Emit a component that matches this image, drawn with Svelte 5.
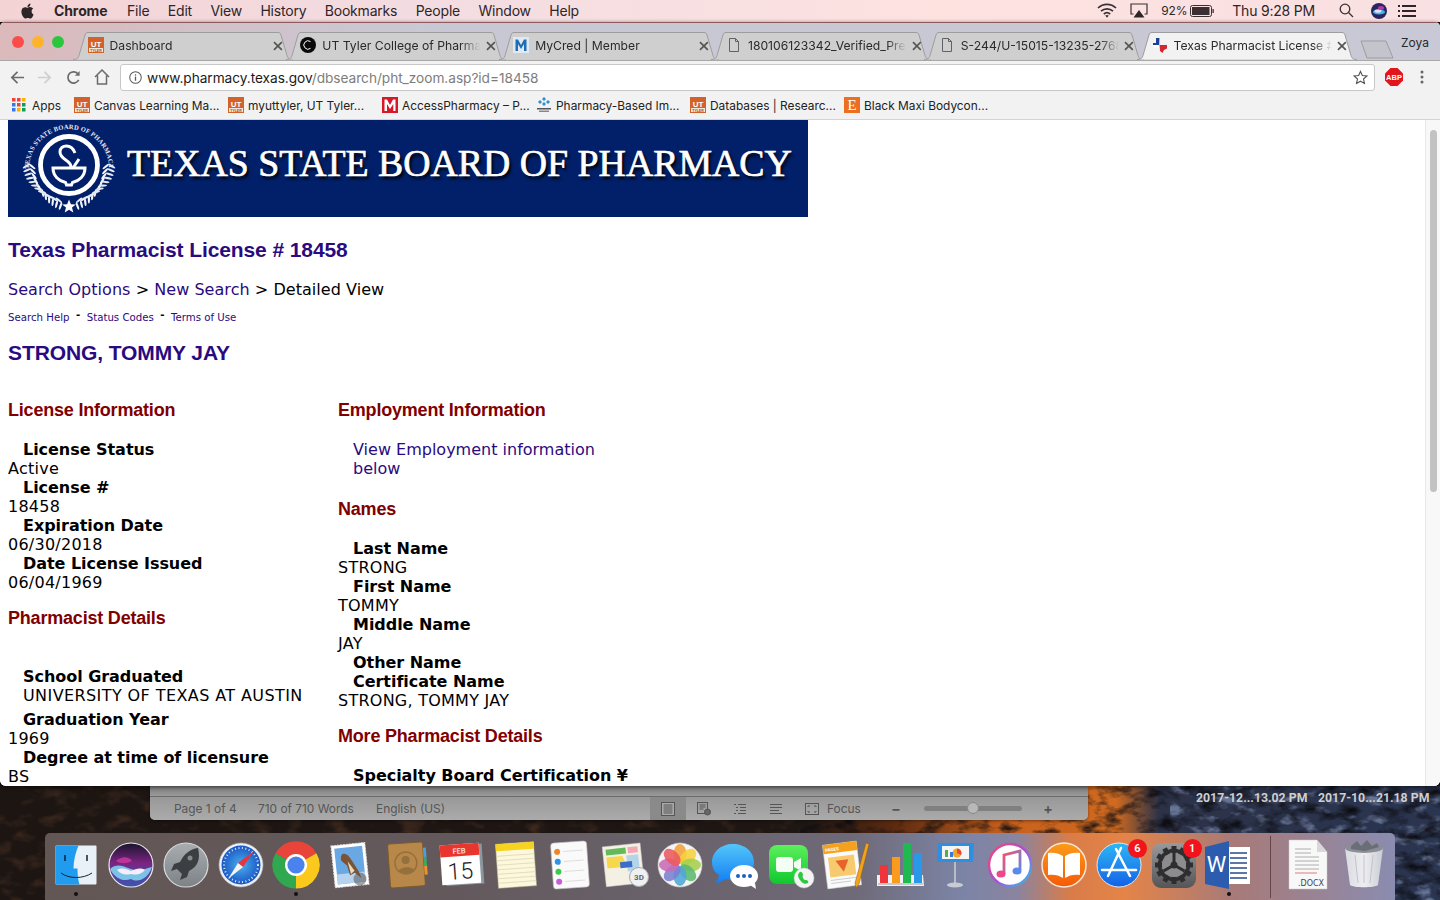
<script lang="ts">
  const menus = ['File', 'Edit', 'View', 'History', 'Bookmarks', 'People', 'Window', 'Help'];

  const tabs = [
    { title: 'Dashboard', icon: 'ut' },
    { title: 'UT Tyler College of Pharmacy', icon: 'circle' },
    { title: 'MyCred | Member', icon: 'm' },
    { title: '180106123342_Verified_Preview', icon: 'file' },
    { title: 'S-244/U-15015-13235-27680', icon: 'file' },
    { title: 'Texas Pharmacist License # 18458', icon: 'texas', active: true }
  ];

  const bookmarks = [
    { title: 'Canvas Learning Ma...', icon: 'ut', width: 154 },
    { title: 'myuttyler, UT Tyler...', icon: 'ut', width: 154 },
    { title: 'AccessPharmacy – P...', icon: 'red', width: 154 },
    { title: 'Pharmacy-Based Im...', icon: 'learner', width: 154 },
    { title: 'Databases | Researc...', icon: 'ut', width: 154 },
    { title: 'Black Maxi Bodycon...', icon: 'etsy', width: 160 }
  ];

  const licenseFields = [
    ['License Status', 'Active'],
    ['License #', '18458'],
    ['Expiration Date', '06/30/2018'],
    ['Date License Issued', '06/04/1969']
  ];

  const nameFields = [
    ['Last Name', 'STRONG'],
    ['First Name', 'TOMMY'],
    ['Middle Name', 'JAY'],
    ['Other Name', ''],
    ['Certificate Name', 'STRONG, TOMMY JAY']
  ];

  const petals = ['#f2a13a', '#f6d13c', '#a5cf4c', '#5cb96f', '#4fa6d8', '#7a7fd0', '#c86bb5', '#ea5a5f'];
  const gearTeeth = [0, 30, 60, 90, 120, 150, 180, 210, 240, 270, 300, 330];

  // laurel leaves on the seal, walking down the ring from the side to the star
  const laurel = Array.from({ length: 12 }, (_, i) => {
    const deg = 4 + i * 6.4;
    const rad = (deg * Math.PI) / 180;
    return { deg, x: 40 * Math.cos(rad), y: 40 * Math.sin(rad) };
  });
</script>

{#snippet utIcon()}
  <svg class="fav" viewBox="0 0 16 16">
    <rect width="16" height="16" fill="#d2622a" />
    <text x="8" y="9.5" text-anchor="middle" class="fav-ut">UT</text>
    <rect x="1" y="11" width="14" height="4" fill="#f5e6d8" />
    <text x="8" y="14.5" text-anchor="middle" class="fav-tyler">TYLER</text>
  </svg>
{/snippet}

{#snippet favicon(name)}
  {#if name === 'ut'}
    {@render utIcon()}
  {:else if name === 'circle'}
    <svg class="fav" viewBox="0 0 16 16">
      <circle cx="8" cy="8" r="8" fill="#0a0a0a" />
      <path d="M10.5 4.6A4.2 4.2 0 1 0 10.5 11.4" fill="none" stroke="#fff" stroke-width="1" />
    </svg>
  {:else if name === 'm'}
    <svg class="fav" viewBox="0 0 16 16">
      <rect width="16" height="16" fill="#dfe9f3" />
      <path d="M2.5 14V2.5H5L8 8l3-5.500h2.500V14h-2.500V7L8 12 5 7v7z" fill="#1f6db5" />
    </svg>
  {:else if name === 'file'}
    <svg class="fav" viewBox="0 0 16 16">
      <path d="M3.500 1.500h6l3 3v10h-9zM9.500 1.500v3h3" fill="none" stroke="#5f6368" stroke-width="1" />
    </svg>
  {:else if name === 'texas'}
    <svg class="fav" viewBox="0 0 16 16">
      <path d="M4 1h4v5l7 1.500v4l-3 1.500-1.500 3-2.500-2-1.500-3-2-1-1.500 1.500L1 8V6h3z" fill="#fff" />
      <path d="M4 1h3.500v7H1V6h3z" fill="#1c3f94" />
      <path d="M7.500 8H15v3.500l-3 1.500-1.500 3-2.500-2z" fill="#d22630" />
      <path d="M7.500 1v7H15V7L8 6z" fill="#eef0f4" />
    </svg>
  {:else if name === 'red'}
    <svg class="fav" viewBox="0 0 16 16">
      <rect width="16" height="16" fill="#d7182a" />
      <path d="M2.500 14V2.500H5L8 8l3-5.500h2.500V14h-2.200V7L8 12 5 7v7z" fill="#fff" />
    </svg>
  {:else if name === 'learner'}
    <svg class="fav" viewBox="0 0 16 16">
      <path d="M8 0l2 2-2 2-2-2zM4 3l2 2-2 2-2-2zM12 3l2 2-2 2-2-2zM8 5l2 2-2 2-2-2z" fill="#2b8fd0" />
      <rect x="1" y="11" width="14" height="1.500" fill="#555" />
      <rect x="3" y="13.500" width="10" height="1.500" fill="#888" />
    </svg>
  {:else if name === 'etsy'}
    <svg class="fav" viewBox="0 0 16 16">
      <rect width="16" height="16" fill="#ee6e1f" />
      <text x="8" y="13" text-anchor="middle" class="fav-etsy">E</text>
    </svg>
  {/if}
{/snippet}

<div class="screen">
  <header class="menubar">
    <svg class="apple" viewBox="0 0 24 24"><path d="M12.152 6.896c-.948 0-2.415-1.078-3.960-1.040-2.040.027-3.910 1.183-4.961 3.014-2.117 3.675-.546 9.103 1.519 12.090 1.013 1.454 2.208 3.090 3.792 3.039 1.520-.065 2.090-.987 3.935-.987 1.831 0 2.350.987 3.960.948 1.637-.026 2.676-1.480 3.676-2.948 1.156-1.688 1.636-3.325 1.662-3.415-.039-.013-3.182-1.221-3.220-4.857-.026-3.040 2.480-4.494 2.597-4.559-1.429-2.090-3.623-2.324-4.390-2.376-2-.156-3.675 1.090-4.610 1.090zM15.530 3.830c.843-1.012 1.400-2.427 1.245-3.830-1.207.052-2.662.805-3.532 1.818-.780.896-1.454 2.338-1.273 3.714 1.338.104 2.715-.688 3.559-1.701" /></svg>
    <strong class="app-name">Chrome</strong>
    <nav class="menus">
      {#each menus as m}<span>{m}</span>{/each}
    </nav>
    <div class="status">
      <svg class="st-wifi" viewBox="0 0 20 15" fill="none" stroke="#3a3033" stroke-width="1.700">
        <path d="M1 5a13 13 0 0 1 18 0M4 8.200a9 9 0 0 1 12 0M6.800 11a5 5 0 0 1 6.400 0" />
        <path d="M10 14.800l-1.800-2.200a3 3 0 0 1 3.600 0z" fill="#3a3033" stroke="none" />
      </svg>
      <svg class="st-air" viewBox="0 0 18 15">
        <path d="M3.500 11H1V1h16v10h-2.500" fill="none" stroke="#3a3033" stroke-width="1.200" />
        <path d="M9 7l5.500 7.500h-11z" fill="#2e2528" />
      </svg>
      <span class="st-pct">92%</span>
      <svg class="st-batt" viewBox="0 0 24 12">
        <rect x=".5" y=".5" width="21" height="11" rx="2" fill="none" stroke="#3a3033" />
        <rect x="2" y="2" width="17.500" height="8" fill="#3a3033" />
        <rect x="22.500" y="4" width="1.300" height="4" fill="#3a3033" />
      </svg>
      <span class="st-time">Thu 9:28 PM</span>
      <svg class="st-search" viewBox="0 0 15 15" fill="none" stroke="#3a3033" stroke-width="1.300">
        <circle cx="6" cy="6" r="4.800" /><path d="M9.500 9.500L14 14" />
      </svg>
      <svg class="st-siri" viewBox="0 0 16 16">
        <circle cx="8" cy="8" r="8" fill="#2a2560" />
        <ellipse cx="8" cy="9" rx="6" ry="2.600" fill="#3fb6e8" />
        <ellipse cx="7" cy="8" rx="3.500" ry="1.800" fill="#e0dff8" />
        <ellipse cx="10" cy="5" rx="3" ry="2" fill="#b83aa8" />
      </svg>
      <svg class="st-list" viewBox="0 0 18 12" fill="#2e2528">
        <rect x="0" y="0" width="2" height="2" /><rect x="4" y="0" width="14" height="2" />
        <rect x="0" y="5" width="2" height="2" /><rect x="4" y="5" width="14" height="2" />
        <rect x="0" y="10" width="2" height="2" /><rect x="4" y="10" width="14" height="2" />
      </svg>
    </div>
  </header>

  <section class="window">
    <div class="tabstrip">
      <div class="lights"><i class="red"></i><i class="amber"></i><i class="green"></i></div>
      <div class="tabs">
        {#each tabs as tab}
          <div class="tab" class:active={tab.active}>
            <svg class="tab-shape" viewBox="0 0 220 28">
              <path d="M0 27.500c4 0 5-1 6-4L12 3c.5-1.800 1.500-2.500 3-2.500h190c1.500 0 2.500.7 3 2.500l6 20.500c1 3 2 4 6 4" />
            </svg>
            {@render favicon(tab.icon)}
            <span class="tab-title">{tab.title}</span>
            <svg class="tab-x" viewBox="0 0 10 10"><path d="M1 1l8 8M9 1l-8 8" /></svg>
          </div>
        {/each}
        <svg class="newtab" viewBox="0 0 34 19"><path d="M1 1h25l7 17H7z" /></svg>
      </div>
      <span class="profile">Zoya</span>
    </div>

    <div class="toolbar">
      <svg class="tb tb-back" viewBox="0 0 16 16" fill="none" stroke="#6b6b6b" stroke-width="1.800"><path d="M15 8H2M8 2L2 8l6 6" /></svg>
      <svg class="tb tb-fwd" viewBox="0 0 16 16" fill="none" stroke="#cfcfcf" stroke-width="1.800"><path d="M1 8h13M8 2l6 6-6 6" /></svg>
      <svg class="tb tb-reload" viewBox="0 0 16 16" fill="none" stroke="#6b6b6b" stroke-width="1.800"><path d="M13.500 10.500A6 6 0 1 1 13 4.500" /><path d="M14.500 1v5h-5z" fill="#6b6b6b" stroke="none" /></svg>
      <svg class="tb tb-home" viewBox="0 0 16 16" fill="none" stroke="#6b6b6b" stroke-width="1.500"><path d="M1 8l7-7 7 7M3.500 6.500V15h9V6.500" /></svg>
      <div class="urlbar">
        <svg class="url-info" viewBox="0 0 14 14"><circle cx="7" cy="7" r="6.200" fill="none" stroke="#5a5a5a" stroke-width="1.100" /><rect x="6.300" y="6" width="1.400" height="4.500" fill="#5a5a5a" /><rect x="6.300" y="3.500" width="1.400" height="1.400" fill="#5a5a5a" /></svg>
        <span class="url-text"><span class="url-host">www.pharmacy.texas.gov</span>/dbsearch/pht_zoom.asp?id=18458</span>
        <svg class="url-star" viewBox="0 0 16 16"><path d="M8 1.500l2 4.400 4.800.5-3.600 3.200 1 4.700L8 11.900l-4.200 2.400 1-4.700L1.200 6.400 6 5.900z" fill="none" stroke="#555" stroke-width="1.200" /></svg>
      </div>
      <svg class="abp" viewBox="0 0 18 18">
        <path d="M5.500 0h7L18 5.500v7L12.500 18h-7L0 12.500v-7z" fill="#e2141c" />
        <text x="9" y="12" text-anchor="middle" class="abp-text">ABP</text>
      </svg>
      <svg class="kebab" viewBox="0 0 4 14" fill="#666"><circle cx="2" cy="2" r="1.500" /><circle cx="2" cy="7" r="1.500" /><circle cx="2" cy="12" r="1.500" /></svg>
    </div>

    <div class="bookmarks">
      <span class="bm bm-apps">
        <svg class="fav" viewBox="0 0 14 14">
          <rect x="0" y="0" width="3.500" height="3.500" fill="#e8453c" /><rect x="5" y="0" width="3.500" height="3.500" fill="#e8453c" /><rect x="10" y="0" width="3.500" height="3.500" fill="#f4b400" />
          <rect x="0" y="5" width="3.500" height="3.500" fill="#3b78e7" /><rect x="5" y="5" width="3.500" height="3.500" fill="#e8453c" /><rect x="10" y="5" width="3.500" height="3.500" fill="#0f9d58" />
          <rect x="0" y="10" width="3.500" height="3.500" fill="#3b78e7" /><rect x="5" y="10" width="3.500" height="3.500" fill="#f4b400" /><rect x="10" y="10" width="3.500" height="3.500" fill="#0f9d58" />
        </svg>
        Apps
      </span>
      {#each bookmarks as b}
        <span class="bm" style="width: {b.width}px">
          {@render favicon(b.icon)}
          {b.title}
        </span>
      {/each}
    </div>

    <main class="page">
      <div class="banner">
        <svg class="seal" viewBox="0 0 96 96">
          <defs>
            <path id="sealArc" d="M8 48a40 40 0 0 1 80 0" />
          </defs>
          <text class="seal-text"><textPath href="#sealArc" startOffset="50%" text-anchor="middle">TEXAS STATE BOARD OF PHARMACY</textPath></text>
          <circle cx="48" cy="44" r="28.500" fill="none" stroke="#fff" stroke-width="4.800" />
          <path d="M32 47h32c0 8-6 13-12.500 14.500l-1 2.500h-5l-1-2.500C38 60 32 55 32 47z" fill="none" stroke="#fff" stroke-width="3" />
          <path d="M50 46C50 39 39 39 39 31 39 27 42 25 45.500 25 50 25 52.500 28 54 32" fill="none" stroke="#fff" stroke-width="3" />
          <path d="M52 47l6-9" stroke="#fff" stroke-width="3" />
          {#each laurel as l}
            <g transform="translate({48 - l.x} {44 + l.y}) rotate({l.deg})">
              <ellipse cx="-3" cy="-1.500" rx="4" ry="1.100" fill="#e4e8f0" transform="rotate(-35 -3 -1.500)" />
              <ellipse cx="3" cy="-1.500" rx="4" ry="1.100" fill="#f4f6fa" transform="rotate(35 3 -1.500)" />
            </g>
            <g transform="translate({48 + l.x} {44 + l.y}) rotate({-l.deg})">
              <ellipse cx="-3" cy="-1.500" rx="4" ry="1.100" fill="#f4f6fa" transform="rotate(-35 -3 -1.500)" />
              <ellipse cx="3" cy="-1.500" rx="4" ry="1.100" fill="#e4e8f0" transform="rotate(35 3 -1.500)" />
            </g>
          {/each}
          <path d="M48 78.500l1.900 4.700 5 .3-3.900 3.100 1.300 4.900-4.300-2.700-4.300 2.700 1.300-4.900-3.900-3.100 5-.3z" fill="#fff" />
        </svg>
        <span class="banner-title">TEXAS STATE BOARD OF PHARMACY</span>
      </div>

      <h1>Texas Pharmacist License # 18458</h1>
      <p class="crumbs"><a href="#top">Search Options</a> &gt; <a href="#top">New Search</a> &gt; Detailed View</p>
      <p class="helplinks">
        <a href="#top">Search Help</a><b>-</b><a href="#top">Status Codes</a><b>-</b><a href="#top">Terms of Use</a>
      </p>
      <h2 class="person">STRONG, TOMMY JAY</h2>

      <div class="columns">
        <div class="col col-left">
          <h3>License Information</h3>
          <dl class="fields">
            {#each licenseFields as [k, v]}
              <dt>{k}</dt>
              <dd>{v}</dd>
            {/each}
          </dl>

          <h3 class="h-pharm">Pharmacist Details</h3>
          <dl class="fields school">
            <dt>School Graduated</dt>
            <dd class="indented">UNIVERSITY OF TEXAS AT AUSTIN</dd>
          </dl>
          <dl class="fields grad">
            <dt>Graduation Year</dt>
            <dd>1969</dd>
            <dt>Degree at time of licensure</dt>
            <dd>BS</dd>
          </dl>
        </div>

        <div class="col col-right">
          <h3>Employment Information</h3>
          <p class="emp-link"><a href="#top">View Employment information below</a></p>

          <h3 class="h-names">Names</h3>
          <dl class="fields">
            {#each nameFields as [k, v]}
              <dt>{k}</dt>
              {#if v}<dd>{v}</dd>{/if}
            {/each}
          </dl>

          <h3 class="h-more">More Pharmacist Details</h3>
          <dl class="fields">
            <dt>Specialty Board Certification ¥</dt>
          </dl>
        </div>
      </div>

      <div class="scrollbar"><div class="thumb"></div></div>
    </main>
  </section>

  <section class="desktop">
    <svg class="wallpaper" viewBox="0 0 1440 114" preserveAspectRatio="none">
      <defs>
        <linearGradient id="wp" x1="0" x2="1" y1="0" y2="0">
          <stop offset="0" stop-color="#1c1512" />
          <stop offset=".56" stop-color="#1e1612" />
          <stop offset=".62" stop-color="#5a2a10" />
          <stop offset=".7" stop-color="#c8611c" />
          <stop offset=".775" stop-color="#cf6a20" />
          <stop offset=".805" stop-color="#2c3248" />
          <stop offset="1" stop-color="#2a3550" />
        </linearGradient>
        <filter id="rock" x="0" y="0" width="100%" height="100%" color-interpolation-filters="sRGB">
          <feTurbulence type="fractalNoise" baseFrequency=".05 .09" numOctaves="4" seed="7" />
          <feColorMatrix values="0 0 0 0 .05  0 0 0 0 .05  0 0 0 0 .07  2.400 0 0 0 -1.050" />
        </filter>
        <filter id="dirt" x="0" y="0" width="100%" height="100%" color-interpolation-filters="sRGB">
          <feTurbulence type="fractalNoise" baseFrequency=".04 .07" numOctaves="3" seed="21" />
          <feColorMatrix values="0 0 0 0 .24  0 0 0 0 .16  0 0 0 0 .12  0 3 0 0 -1.500" />
        </filter>
        <filter id="snow" x="0" y="0" width="100%" height="100%" color-interpolation-filters="sRGB">
          <feTurbulence type="fractalNoise" baseFrequency=".06 .1" numOctaves="3" seed="3" />
          <feColorMatrix values="0 0 0 0 .4  0 0 0 0 .45  0 0 0 0 .58  0 4 0 0 -2.200" />
        </filter>
      </defs>
      <rect width="1440" height="114" fill="url(#wp)" />
      <rect width="800" height="114" filter="url(#dirt)" />
      <rect x="1170" width="270" height="114" filter="url(#snow)" />
      <rect x="800" width="640" height="114" filter="url(#rock)" />
    </svg>

    <span class="shot shot-a">2017-12...13.02 PM</span>
    <span class="shot shot-b">2017-10...21.18 PM</span>

    <div class="word">
      <div class="word-ruler"></div>
      <div class="word-status">
        <span class="ws-text ws-page">Page 1 of 4</span>
        <span class="ws-text ws-words">710 of 710 Words</span>
        <span class="ws-text ws-lang">English (US)</span>
        <span class="ws-view active">
          <svg viewBox="0 0 14 14" fill="none" stroke="#555"><rect x=".5" y=".5" width="13" height="13" fill="#aaa" /><path d="M2.500 3h9M2.500 5h9M2.500 7h9M2.500 9h9M2.500 11h9" /></svg>
        </span>
        <span class="ws-view">
          <svg viewBox="0 0 14 14" fill="none" stroke="#555"><rect x=".5" y=".5" width="10" height="11" /><path d="M2.500 3h6M2.500 5h6M2.500 7h4" /><circle cx="10.500" cy="10" r="3" fill="#666" /></svg>
        </span>
        <span class="ws-view">
          <svg viewBox="0 0 14 14" fill="none" stroke="#555"><path d="M1 2.500h2M5 2.500h8M3 5.500h2M7 5.500h6M3 8.500h2M7 8.500h6M1 11.500h2M5 11.500h8" /></svg>
        </span>
        <span class="ws-view">
          <svg viewBox="0 0 14 14" fill="none" stroke="#555"><path d="M1 2.500h12M1 5.500h12M1 8.500h9M1 11.500h12" /></svg>
        </span>
        <span class="ws-focus">
          <svg viewBox="0 0 14 12" fill="none" stroke="#555"><rect x=".5" y=".5" width="13" height="11" /><path d="M3 4V3h2M9 3h2v1M11 8v1H9M5 9H3V8" /></svg>
          Focus
        </span>
        <span class="ws-minus">−</span>
        <div class="slider"><i></i></div>
        <span class="ws-plus">+</span>
      </div>
    </div>

    <div class="dock">
      <div class="dock-item dot">
        <svg viewBox="0 0 54 60">
          <rect x="6.500" y="10.500" width="41" height="39" rx="1" fill="#e8f1f8" />
          <path d="M7.500 10.500h22c-3 7-5 15-5 23h4c0 6 .5 11 2 16h-23a1 1 0 0 1-1-1v-37a1 1 0 0 1 1-1z" fill="#1f9cf0" />
          <path d="M12 38c8 6 22 6 31 0" fill="none" stroke="#123" stroke-width="1" />
          <path d="M16 20v6M38 20v6" stroke="#123" stroke-width="1.500" />
        </svg>
      </div>
      <div class="dock-item">
        <svg viewBox="0 0 54 60">
          <defs>
            <linearGradient id="siriG" x1="0" y1="0" x2="0" y2="1"><stop offset="0" stop-color="#18142c" /><stop offset=".45" stop-color="#7a2480" /><stop offset="1" stop-color="#3a56b0" /></linearGradient>
          </defs>
          <circle cx="27" cy="30" r="22" fill="url(#siriG)" stroke="#e8e8ee" stroke-width="1.200" />
          <path d="M6 34c7-6 12-3 21 0 8 3 13 0 21-2-4 12-14 16-21 12-7 3-16 0-21-10z" fill="#7fd0f0" opacity=".9" />
          <path d="M13 35c5-3 9-1 14 1 5-2 9-4 14-1-5 5-8 5-14 4-6 1-9 1-14-4z" fill="#f4eefa" />
          <path d="M12 26c6-5 12-5 16 0-6 3-11 3-16 0z" fill="#d03aa0" opacity=".8" />
        </svg>
      </div>
      <div class="dock-item">
        <svg viewBox="0 0 54 60">
          <defs>
            <linearGradient id="lpG" x1="0" y1="0" x2="0" y2="1"><stop offset="0" stop-color="#a8adb0" /><stop offset="1" stop-color="#7c8285" /></linearGradient>
          </defs>
          <circle cx="27" cy="30" r="22" fill="url(#lpG)" stroke="#d8dadc" stroke-width="1.200" />
          <path d="M39 13c-8 1-14 6-18 14l-6 2-3 7 6-2 5 5-2 6 7-3 2-6c8-4 12-11 9-23z" fill="#3c3f42" />
          <circle cx="31" cy="23" r="2.500" fill="#85898c" />
        </svg>
      </div>
      <div class="dock-item">
        <svg viewBox="0 0 54 60">
          <defs>
            <radialGradient id="sfG"><stop offset="0" stop-color="#4ab0ee" /><stop offset="1" stop-color="#1a56c4" /></radialGradient>
          </defs>
          <circle cx="27" cy="30" r="22" fill="#eef1f4" stroke="#aab" stroke-width=".6" />
          <circle cx="27" cy="30" r="19.500" fill="url(#sfG)" />
          <circle cx="27" cy="30" r="17" fill="none" stroke="#d8e8f8" stroke-width="2" stroke-dasharray="1 2.500" />
          <path d="M40 16L24 28l5 4z" fill="#e8343a" />
          <path d="M14 44l10-16 5 4z" fill="#f4f4f6" />
        </svg>
      </div>
      <div class="dock-item dot">
        <svg viewBox="0 0 54 60">
          <path d="M27 30L6.600 18.200A23.500 23.500 0 0 1 47.400 18.200z" fill="#e8443a" />
          <path d="M27 30L47.400 18.200A23.500 23.500 0 0 1 27 53.500z" fill="#fbc91c" />
          <path d="M27 30L27 53.500A23.500 23.500 0 0 1 6.600 18.200z" fill="#2fa84f" />
          <circle cx="27" cy="30" r="11" fill="#fff" />
          <circle cx="27" cy="30" r="8.600" fill="#4a82ee" />
        </svg>
      </div>
      <div class="dock-item">
        <svg viewBox="0 0 54 60">
          <g transform="rotate(-6 27 30)">
            <rect x="9" y="9" width="34" height="42" fill="#fff" stroke="#ddd" stroke-dasharray="2 1" />
            <rect x="12" y="12" width="28" height="36" fill="#6aa8e4" />
            <path d="M12 38h28v10H12z" fill="#b5d2ee" />
            <path d="M20 18c4 0 6 3 8 7l6 12 2 7-6-6-5 2-2-10-5-5c-1-3 0-6 2-7z" fill="#7a5434" />
            <path d="M24 26l6 10-4 3z" fill="#e8d8c0" />
          </g>
          <circle cx="36" cy="44" r="6.500" fill="#555" opacity=".55" />
        </svg>
      </div>
      <div class="dock-item">
        <svg viewBox="0 0 54 60">
          <g transform="rotate(-4 27 30)">
            <rect x="10" y="8" width="35" height="44" rx="2" fill="#b8874a" stroke="#7e5a2e" />
            <path d="M45 24h3v8h-3z" fill="#3fa56a" /><path d="M45 32h3v9h-3z" fill="#e8952a" /><path d="M45 14h3v10h-3z" fill="#4d9ed4" />
            <circle cx="27" cy="28" r="11" fill="none" stroke="#94703c" stroke-width="1.400" />
            <circle cx="27" cy="25" r="4" fill="#94703c" />
            <path d="M19 36c2-5 14-5 16 0-4 3-12 3-16 0z" fill="#94703c" />
          </g>
        </svg>
      </div>
      <div class="dock-item">
        <svg viewBox="0 0 54 60">
          <g transform="rotate(-4 27 30)">
            <rect x="11" y="10" width="38" height="40" fill="#8c97a2" />
            <rect x="7" y="9" width="39" height="40" fill="#fff" />
            <rect x="7" y="9" width="39" height="12" fill="#e8362e" />
            <text x="26" y="18.500" text-anchor="middle" class="cal-month">FEB</text>
            <text x="26" y="44" text-anchor="middle" class="cal-day">15</text>
          </g>
        </svg>
      </div>
      <div class="dock-item">
        <svg viewBox="0 0 54 60">
          <g transform="rotate(-4 27 30)">
            <rect x="8" y="8" width="38" height="44" fill="#fdf8dc" stroke="#c8c0a0" stroke-width=".5" />
            <rect x="8" y="8" width="38" height="7" fill="#f6d320" />
            <path d="M8 20h38M8 24.500h38M8 29h38M8 33.500h38M8 38h38M8 42.500h38M8 47h38" stroke="#d8d2b4" stroke-width=".7" />
          </g>
        </svg>
      </div>
      <div class="dock-item">
        <svg viewBox="0 0 54 60">
          <g transform="rotate(-4 27 30)">
            <rect x="9" y="7" width="36" height="46" rx="3" fill="#fafafa" stroke="#bbb" stroke-width=".6" />
            <circle cx="15" cy="16" r="3" fill="#f0862a" /><circle cx="15" cy="26" r="3" fill="#2a94ea" /><circle cx="15" cy="36" r="3" fill="#3ec948" /><circle cx="15" cy="46" r="3" fill="#c95ad8" />
            <path d="M21 16h20M21 26h20M21 36h20M21 46h20" stroke="#ddd" />
          </g>
        </svg>
      </div>
      <div class="dock-item">
        <svg viewBox="0 0 54 60">
          <g transform="rotate(-6 24 28)">
            <rect x="6" y="10" width="38" height="40" fill="#f4f0e4" stroke="#ccc" stroke-width=".5" />
            <rect x="9" y="13" width="20" height="6" fill="#63bb58" /><rect x="31" y="13" width="10" height="6" fill="#f4a8b4" />
            <path d="M9 21h16l4 11H9z" fill="#f6d84a" /><path d="M29 21h12v16H29z" fill="#b4d4ea" />
            <rect x="22" y="27" width="12" height="6" fill="#3a6ec8" />
          </g>
          <circle cx="41" cy="42" r="9.500" fill="#eef0f2" stroke="#aaa" />
          <text x="41" y="45" text-anchor="middle" class="map-3d">3D</text>
        </svg>
      </div>
      <div class="dock-item">
        <svg viewBox="0 0 54 60">
          <circle cx="27" cy="30" r="22" fill="#f4f4f4" stroke="#ccc" stroke-width=".6" />
          {#each petals as c, i}
            <ellipse cx="27" cy="19" rx="6.500" ry="10" fill={c} opacity=".88" transform="rotate({i * 45} 27 30)" />
          {/each}
        </svg>
      </div>
      <div class="dock-item">
        <svg viewBox="0 0 54 60">
          <defs>
            <linearGradient id="msgG" x1="0" y1="0" x2="0" y2="1"><stop offset="0" stop-color="#54c6fa" /><stop offset="1" stop-color="#127ef2" /></linearGradient>
          </defs>
          <path d="M25 9c12 0 21 8 21 18s-9 18-21 18c-3 0-5-.3-8-1-2 2-6 4-10 4 2-2 4-5 4-8C6 37 4 32 4 27 4 17 13 9 25 9z" fill="url(#msgG)" />
          <ellipse cx="36" cy="41" rx="14" ry="11" fill="#fff" />
          <path d="M42 50l6 4-1-6z" fill="#fff" />
          <circle cx="30" cy="41" r="2" fill="#1f60c0" /><circle cx="36" cy="41" r="2" fill="#1f60c0" /><circle cx="42" cy="41" r="2" fill="#1f60c0" />
        </svg>
      </div>
      <div class="dock-item">
        <svg viewBox="0 0 54 60">
          <defs>
            <linearGradient id="ftG" x1="0" y1="0" x2="0" y2="1"><stop offset="0" stop-color="#5cf05c" /><stop offset="1" stop-color="#0fc72e" /></linearGradient>
          </defs>
          <rect x="6" y="10" width="39" height="39" rx="8" fill="url(#ftG)" />
          <rect x="13" y="22" width="17" height="15" rx="3" fill="#f2fff2" />
          <path d="M31 27l7-4v13l-7-4z" fill="#f2fff2" />
          <circle cx="41" cy="43" r="10" fill="#f4f4f4" stroke="#ccc" stroke-width=".5" />
          <path d="M37 37c2-1 3 2 3 3s-1 1 0 3 2 2 3 2 3 1 2 3c-3 2-6 0-8-3s-3-6 0-8z" fill="#2ac940" />
        </svg>
      </div>
      <div class="dock-item">
        <svg viewBox="0 0 54 60">
          <g transform="rotate(-7 24 30)">
            <rect x="7" y="8" width="34" height="44" fill="#fafafa" stroke="#ccc" stroke-width=".5" />
            <rect x="7" y="8" width="34" height="9" fill="#f4a21e" />
            <text x="16" y="15" text-anchor="middle" class="pages-text">PAGES</text>
            <rect x="11" y="21" width="26" height="20" fill="#f8ca70" />
            <path d="M18 25h13l-6 12z" fill="#e8632a" />
            <path d="M11 44h26M11 47h20" stroke="#ccc" />
          </g>
          <path d="M48 8l3 1-10 40-3 4-1-5z" fill="#f2a31e" stroke="#8a5a10" stroke-width=".5" />
        </svg>
      </div>
      <div class="dock-item">
        <svg viewBox="0 0 54 60">
          <path d="M4 40h46l1 11H4z" fill="#f0f0f0" />
          <rect x="7" y="30" width="8" height="19" fill="#f0343c" />
          <rect x="19" y="22" width="8" height="27" fill="#fa9a1e" />
          <rect x="30" y="8" width="8" height="41" fill="#20b850" />
          <rect x="41" y="18" width="8" height="31" fill="#2a98e8" />
          <path d="M5 49h45" stroke="#c8c8c8" stroke-width="2" />
        </svg>
      </div>
      <div class="dock-item">
        <svg viewBox="0 0 54 60">
          <path d="M10 8h36l-1 19H9z" fill="#2e8fe0" />
          <rect x="14" y="11" width="27" height="13" fill="#f4f4f4" />
          <circle cx="29" cy="18" r="4.500" fill="#f0a42a" />
          <path d="M29 18v-4.500a4.500 4.500 0 0 1 4 6.500z" fill="#e8443a" />
          <rect x="17" y="15" width="3" height="7" fill="#55aa55" /><rect x="22" y="17" width="3" height="5" fill="#3a78d8" />
          <path d="M27 27v21" stroke="#b8bcc4" stroke-width="2" />
          <ellipse cx="27" cy="50" rx="8" ry="2.500" fill="#c8ccd2" />
        </svg>
      </div>
      <div class="dock-item">
        <svg viewBox="0 0 54 60">
          <defs>
            <linearGradient id="itG" x1="0" y1="0" x2="1" y2="1"><stop offset="0" stop-color="#f04a6a" /><stop offset=".5" stop-color="#b04ad8" /><stop offset="1" stop-color="#2ac4ea" /></linearGradient>
            <linearGradient id="itN" x1="0" y1="0" x2="1" y2="1"><stop offset="0" stop-color="#f8506a" /><stop offset="1" stop-color="#5a8aea" /></linearGradient>
          </defs>
          <circle cx="27" cy="30" r="21" fill="#fff" stroke="url(#itG)" stroke-width="2.500" />
          <path d="M21 39V20l16-4v19" fill="none" stroke="url(#itN)" stroke-width="2.800" />
          <ellipse cx="18" cy="39" rx="4.500" ry="3.500" fill="#f0468a" />
          <ellipse cx="34" cy="36" rx="4.500" ry="3.500" fill="#5a8aea" />
        </svg>
      </div>
      <div class="dock-item">
        <svg viewBox="0 0 54 60">
          <defs>
            <linearGradient id="ibG" x1="0" y1="0" x2="0" y2="1"><stop offset="0" stop-color="#fb9c18" /><stop offset="1" stop-color="#f55a08" /></linearGradient>
          </defs>
          <circle cx="27" cy="30" r="22" fill="url(#ibG)" stroke="#f4e8dc" stroke-width="1.500" />
          <path d="M26 21c-4-3-10-4-15-3v22c5-1 11 0 15 3zM28 21c4-3 10-4 15-3v22c-5-1-11 0-15 3z" fill="#fff" />
        </svg>
      </div>
      <div class="dock-item">
        <svg viewBox="0 0 54 60">
          <defs>
            <linearGradient id="asG" x1="0" y1="0" x2="0" y2="1"><stop offset="0" stop-color="#2cb8f4" /><stop offset="1" stop-color="#1560e8" /></linearGradient>
          </defs>
          <circle cx="27" cy="30" r="22" fill="url(#asG)" stroke="#dfe6f2" stroke-width="1" />
          <path d="M29 13L16 41M24 14l14 27M10 35h34" fill="none" stroke="#fff" stroke-width="2.500" stroke-linecap="round" />
        </svg>
        <span class="badge">6</span>
      </div>
      <div class="dock-item">
        <svg viewBox="0 0 54 60">
          <defs>
            <linearGradient id="spG" x1="0" y1="0" x2="0" y2="1"><stop offset="0" stop-color="#9a9a9c" /><stop offset="1" stop-color="#555558" /></linearGradient>
          </defs>
          <rect x="5" y="8" width="44" height="45" rx="9" fill="url(#spG)" />
          {#each gearTeeth as a}
            <rect x="24.500" y="11" width="5" height="7" fill="#2e2e30" transform="rotate({a} 27 30)" />
          {/each}
          <circle cx="27" cy="30" r="14.500" fill="none" stroke="#2e2e30" stroke-width="3.500" />
          <circle cx="27" cy="30" r="12" fill="#8c8c8e" />
          <path d="M27 30V18M27 30l10.500 6M27 30l-10.500 6" stroke="#2e2e30" stroke-width="3" />
          <circle cx="27" cy="30" r="3.500" fill="#2e2e30" />
        </svg>
        <span class="badge">1</span>
      </div>
      <div class="dock-item dot">
        <svg viewBox="0 0 54 60">
          <rect x="20" y="12" width="28" height="37" fill="#fff" />
          <path d="M28 18h17M28 23h17M28 28h17M28 33h17M28 38h17M28 43h17" stroke="#2a4a8a" stroke-width="1.400" />
          <path d="M3 12L27 6v48L3 49z" fill="#2b5cae" />
          <text x="14.500" y="37" text-anchor="middle" class="word-w">W</text>
        </svg>
      </div>
      <div class="dock-sep"></div>
      <div class="dock-item doc">
        <svg viewBox="0 0 54 60">
          <path d="M8 5h28l10 12v37H8z" fill="#f8f8f8" stroke="#c8c8c8" stroke-width=".5" />
          <path d="M36 5l10 12H36z" fill="#d8d8d8" />
          <path d="M14 14h16M14 18h16M14 22h24M14 26h24M14 30h24M14 34h24" stroke="#999" stroke-width=".8" />
          <path d="M14 38h22" stroke="#d9585a" stroke-width=".8" />
          <text x="30" y="51" text-anchor="middle" class="doc-text">.DOCX</text>
        </svg>
      </div>
      <div class="dock-item trash">
        <svg viewBox="0 0 54 60">
          <defs>
            <linearGradient id="trG" x1="0" y1="0" x2="1" y2="0"><stop offset="0" stop-color="#dfe2e6" /><stop offset=".5" stop-color="#f6f7f8" /><stop offset="1" stop-color="#cfd2d8" /></linearGradient>
          </defs>
          <path d="M8 13h38l-5 37c-3 3-25 3-28 0z" fill="url(#trG)" opacity=".92" />
          <ellipse cx="27" cy="13" rx="19" ry="5" fill="#8a8e96" />
          <path d="M14 11l6-5 4 5 6-6 5 6 5-3 2 4-14 4-14-2z" fill="#6a6e76" />
          <path d="M18 20l3 28M27 20v28M36 20l-3 28" stroke="#c0c4ca" />
        </svg>
      </div>
    </div>
  </section>
</div>

<style>
  :global(body) {
    margin: 0;
    background: #14100e;
  }

  .screen {
    width: 1440px;
    height: 900px;
    overflow: hidden;
    display: flex;
    flex-direction: column;
    font-family: Inter, sans-serif;
  }

  /* menu bar */
  .menubar {
    height: 22px;
    flex-shrink: 0;
    display: flex;
    align-items: center;
    padding: 0 0 1px 20px;
    box-sizing: border-box;
    font-size: 14px;
    color: #2e2528;
    background: linear-gradient(90deg, #f4d3d5, #f3dde2 30%, #fde2e0 65%, #f9e0e2);
  }

  .apple {
    width: 15px;
    height: 16px;
    fill: #2e2528;
    margin-right: 19px;
  }

  .app-name {
    font-weight: 700;
    width: 73px;
    letter-spacing: -0.1px;
  }

  .menus {
    display: flex;
    gap: 18.4px;
    letter-spacing: -0.2px;
  }

  .status {
    margin-left: auto;
    display: flex;
    align-items: center;
    padding-right: 24px;
    letter-spacing: -0.2px;
  }

  .st-wifi { width: 20px; height: 15px; margin-right: 13px; }
  .st-air { width: 18px; height: 15px; margin-right: 13px; }
  .st-pct { font-size: 12px; margin-right: 3px; }
  .st-batt { width: 24px; height: 12px; margin-right: 18px; }
  .st-time { margin-right: 24px; }
  .st-search { width: 15px; height: 15px; margin-right: 17px; }
  .st-siri { width: 16px; height: 16px; margin-right: 11px; }
  .st-list { width: 18px; height: 12px; }

  /* browser window */
  .window {
    height: 764px;
    flex-shrink: 0;
    display: flex;
    flex-direction: column;
    border-radius: 5px 5px 6px 6px;
    overflow: hidden;
    background: #f2f2f2;
    position: relative;
    z-index: 2;
    box-shadow: 0 1px 4px rgba(0, 0, 0, 0.6);
  }

  .tabstrip {
    height: 38px;
    flex-shrink: 0;
    display: flex;
    align-items: flex-end;
    background: linear-gradient(90deg, #dcb9ba, #d4bfc5 10%, #c8c8d4 30%, #c8c8d6 100%);
    border-top: 1px solid #8e5a5c;
    box-sizing: border-box;
    position: relative;
  }

  .lights {
    position: absolute;
    left: 12px;
    top: 13px;
    display: flex;
    gap: 8px;
  }

  .lights i {
    width: 12px;
    height: 12px;
    border-radius: 50%;
  }

  .lights .red { background: #fb4c4a; }
  .lights .amber { background: #fdb42a; }
  .lights .green { background: #2cc63e; }

  .tabs {
    display: flex;
    align-items: flex-end;
    padding-left: 73px;
    height: 28px;
    flex: 1;
  }

  .tab {
    position: relative;
    width: 220px;
    height: 28px;
    margin-right: -7.2px;
    box-sizing: border-box;
    padding: 5px 10px 0 14.5px;
    display: flex;
    align-items: flex-start;
    font-size: 12.2px;
    color: #2a2a2a;
    flex-shrink: 0;
  }

  .tab.active {
    z-index: 2;
  }

  .tab-shape {
    position: absolute;
    inset: 0;
    width: 220px;
    height: 28px;
    fill: #cfcfcf;
    stroke: #9d9d9d;
    stroke-width: 1;
  }

  .tab.active .tab-shape {
    fill: #f2f2f2;
  }

  .fav {
    width: 16px;
    height: 16px;
    flex-shrink: 0;
    position: relative;
  }

  .tab-title {
    position: relative;
    margin-left: 6px;
    width: 161px;
    line-height: 16px;
    padding-top: 1px;
    white-space: nowrap;
    overflow: hidden;
    -webkit-mask-image: linear-gradient(90deg, #000 88%, transparent);
    mask-image: linear-gradient(90deg, #000 88%, transparent);
  }

  .tab-x {
    position: relative;
    width: 10px;
    height: 10px;
    margin: 4px 0 0 5.500px;
    stroke: #555;
    stroke-width: 1.700;
    fill: none;
  }

  .newtab {
    width: 34px;
    height: 19px;
    margin: 8px 0 0 10px;
    fill: #c4c4cc;
    stroke: #9d9d9d;
    flex-shrink: 0;
    align-self: flex-start;
  }

  .profile {
    position: absolute;
    right: 11px;
    top: 12px;
    font-size: 12px;
    color: #2a2a2a;
  }

  .fav-ut { font: 700 8px "Liberation Sans", sans-serif; fill: #fff; }
  .fav-tyler { font: 700 3.500px "Liberation Sans", sans-serif; fill: #a84a1e; }
  .fav-etsy { font: 400 15px "Liberation Serif", serif; fill: #fff; }

  .toolbar {
    height: 33px;
    flex-shrink: 0;
    display: flex;
    align-items: center;
    padding-left: 10px;
    background: #f2f2f2;
    border-top: 1px solid #a8a8a8;
    box-sizing: border-box;
  }

  .tb { width: 15px; height: 15px; flex-shrink: 0; }
  .tb-back { margin-right: 12px; }
  .tb-fwd { margin-right: 14px; }
  .tb-reload { margin-right: 13px; }
  .tb-home { width: 16px; height: 16px; margin-right: 10px; }

  .urlbar {
    width: 1255px;
    height: 27px;
    margin-top: 1px;
    box-sizing: border-box;
    display: flex;
    align-items: center;
    padding: 0 6px 0 8px;
    background: #fff;
    border: 1px solid #c8c8c8;
    border-radius: 3px;
  }

  .url-info { width: 13px; height: 13px; margin-right: 5px; flex-shrink: 0; }

  .url-text {
    font-size: 13.700px;
    color: #7d7d7d;
    letter-spacing: -0.05px;
  }

  .url-host { color: #1a1a1a; }

  .url-star { width: 15px; height: 15px; margin-left: auto; }

  .abp { width: 18px; height: 18px; margin-left: 10px; flex-shrink: 0; }
  .abp-text { font: 700 7.500px "Liberation Sans", sans-serif; fill: #fff; }
  .kebab { width: 4px; height: 14px; margin-left: 17px; flex-shrink: 0; }

  .bookmarks {
    height: 27px;
    flex-shrink: 0;
    display: flex;
    align-items: center;
    padding: 0 0 2px 12px;
    background: #f2f2f2;
    border-bottom: 1px solid #d4d4d4;
    box-sizing: border-box;
    font-size: 11.900px;
    color: #222;
  }

  .bm {
    display: flex;
    align-items: center;
    gap: 4px;
    white-space: nowrap;
    flex-shrink: 0;
  }

  .bm-apps {
    width: 62px;
    gap: 6px;
  }

  .bm-apps .fav {
    width: 14px;
    height: 14px;
  }

  /* page */
  .page {
    flex: 1;
    min-height: 0;
    position: relative;
    overflow: hidden;
    background: #fff;
    padding-left: 8px;
    font: 16px/19px "DejaVu Sans", Verdana, sans-serif;
    color: #000;
  }

  .page a {
    color: #2a0a80;
    text-decoration: none;
  }

  .banner {
    width: 800px;
    height: 97px;
    display: flex;
    align-items: center;
    background: #02206a;
  }

  .seal {
    width: 96px;
    height: 96px;
    margin-left: 13px;
    flex-shrink: 0;
  }

  .seal-text {
    font: 700 6.500px "Liberation Serif", serif;
    letter-spacing: .2px;
    fill: #e8ecf4;
  }

  .banner-title {
    margin: 0 0 12px 10px;
    font: 400 37.800px "Liberation Serif", serif;
    -webkit-text-stroke: 0.7px #fff;
    color: #fff;
    white-space: nowrap;
    text-shadow: 2px 3px 3px #000;
  }

  h1, .person, h3 {
    font-family: "Liberation Sans", Arial, sans-serif;
    font-weight: 700;
    margin: 0;
  }

  h1 {
    font-size: 21px;
    letter-spacing: -0.1px;
    line-height: 26px;
    margin-top: 20px;
    color: #2a0a80;
  }

  .crumbs {
    margin: 17px 0 0;
    line-height: 20px;
    letter-spacing: 0.05px;
  }

  .helplinks {
    margin: 11px 0 0;
    font-size: 10.200px;
    line-height: 14px;
    display: flex;
  }

  .helplinks b {
    margin: -3px 6.500px 0;
    font-weight: 700;
  }

  .person {
    font-size: 21px;
    letter-spacing: -0.1px;
    line-height: 26px;
    margin-top: 15px;
    color: #2a0a80;
  }

  .columns {
    display: grid;
    grid-template-columns: 330px 330px;
    margin-top: 33px;
  }

  h3 {
    font-size: 18px;
    letter-spacing: -0.2px;
    line-height: 22px;
    color: #800000;
  }

  .fields {
    margin: 19px 0 0;
  }

  dt {
    font-weight: 700;
    padding-left: 15px;
    letter-spacing: -0.04px;
  }

  dd {
    margin: 0;
    letter-spacing: 0.25px;
  }

  dd.indented {
    padding-left: 15px;
    letter-spacing: 0.41px;
  }

  .h-pharm { margin-top: 15px; }
  .school { margin-top: 38px; }
  .fields.grad { margin-top: 5px; }

  .emp-link {
    margin: 19px 0 0;
    padding-left: 15px;
    width: 270px;
  }

  .h-names { margin-top: 20px; }
  .h-more { margin-top: 15px; }

  .scrollbar {
    position: absolute;
    right: 0;
    top: 0;
    bottom: 0;
    width: 15px;
    box-sizing: border-box;
    padding: 10px 3px 0 4px;
    background: #f8f8f8;
    border-left: 1px solid #e8e8e8;
  }

  .thumb {
    height: 362px;
    border-radius: 4px;
    background: #c2c2c2;
  }

  /* desktop behind the window */
  .desktop {
    position: relative;
    flex: 1;
    min-height: 0;
    display: flex;
    flex-direction: column;
  }

  .wallpaper {
    position: absolute;
    inset: 0;
    width: 100%;
    height: 100%;
  }

  .shot {
    position: absolute;
    top: 5px;
    font: 700 12.300px Roboto, sans-serif;
    color: #cfcfcf;
    white-space: nowrap;
  }

  .shot-a { left: 1196px; }
  .shot-b { left: 1318px; }

  .word {
    position: relative;
    margin-left: 150px;
    width: 938px;
    height: 34px;
    flex-shrink: 0;
    background: #a2a2a2;
    border-radius: 0 0 5px 5px;
    overflow: hidden;
    display: flex;
    flex-direction: column;
    box-shadow: 0 1px 3px rgba(0, 0, 0, 0.4);
  }

  .word-ruler {
    height: 10px;
    flex-shrink: 0;
    background: linear-gradient(#7c7c7c, #9a9a9a);
    border-bottom: 1px solid #6c6c6c;
  }

  .word-status {
    flex: 1;
    display: flex;
    align-items: center;
    padding-left: 24px;
    font-size: 11.900px;
    color: #565656;
    background: linear-gradient(#989898, #ababab);
  }

  .ws-page { width: 84px; }
  .ws-words { width: 118px; }
  .ws-lang { width: 274px; }

  .ws-view {
    width: 36px;
    height: 100%;
    display: flex;
    align-items: center;
    justify-content: center;
    margin-right: 0;
  }

  .ws-view.active { background: #8a8a8a; }

  .ws-view svg {
    width: 14px;
    height: 14px;
  }

  .ws-focus {
    display: flex;
    align-items: center;
    gap: 8px;
    width: 86px;
    margin-left: 11px;
  }

  .ws-focus svg {
    width: 14px;
    height: 12px;
  }

  .ws-minus, .ws-plus {
    font-size: 14px;
    font-weight: 700;
    color: #555;
    width: 10px;
    text-align: center;
  }

  .slider {
    width: 98px;
    height: 5px;
    margin: 0 21px 0 23px;
    background: #808080;
    border-radius: 3px;
    position: relative;
  }

  .slider i {
    position: absolute;
    left: 43px;
    top: -4px;
    width: 12px;
    height: 12px;
    border-radius: 50%;
    background: #b8b8b8;
    border: 1px solid #888;
    box-sizing: border-box;
  }

  .dock {
    position: relative;
    margin: 13px 0 0 45px;
    width: 1350px;
    height: 67px;
    flex-shrink: 0;
    display: flex;
    box-sizing: border-box;
    padding: 2px 0 0 4px;
    border-radius: 5px 5px 0 0;
    background: linear-gradient(90deg, #635755, #63595c 30%, #6f6a78 60%, #7c84a6 68%, #8a84a0 72%, #d97c48 76%, #e48448 80%, #a87a78 88%, #8a8cb0 100%);
  }

  .dock-item {
    position: relative;
    width: 54.900px;
    height: 60px;
    flex-shrink: 0;
    display: flex;
    justify-content: center;
  }

  .dock-item svg {
    width: 54px;
    height: 60px;
    overflow: visible;
  }

  .dock-item.dot::after {
    content: '';
    position: absolute;
    bottom: -1px;
    left: 50%;
    width: 4px;
    height: 4px;
    margin-left: -2px;
    border-radius: 50%;
    background: #111;
  }

  .dock-sep {
    width: 1px;
    height: 62px;
    margin: 1px 0 0 13px;
    background: rgba(60, 30, 30, 0.6);
    flex-shrink: 0;
  }

  .dock-item.doc { margin-left: 10px; }
  .dock-item.trash { margin-left: 1px; }

  .badge {
    position: absolute;
    top: 4px;
    right: 0;
    width: 19px;
    height: 19px;
    border-radius: 50%;
    background: #f2141c;
    color: #fff;
    font: 600 11px/19px Roboto, sans-serif;
    text-align: center;
  }

  .cal-month { font: 500 7.500px Roboto, sans-serif; fill: #fbe4e0; }
  .cal-day { font: 300 23px Roboto, sans-serif; fill: #222; }
  .map-3d { font: 700 8px Roboto, sans-serif; fill: #666; }
  .pages-text { font: 700 4.500px Roboto, sans-serif; fill: #fff; }
  .word-w { font: 400 22px Roboto, sans-serif; fill: #fff; }
  .doc-text { font: 400 8px "DejaVu Sans", sans-serif; fill: #444; }
</style>
